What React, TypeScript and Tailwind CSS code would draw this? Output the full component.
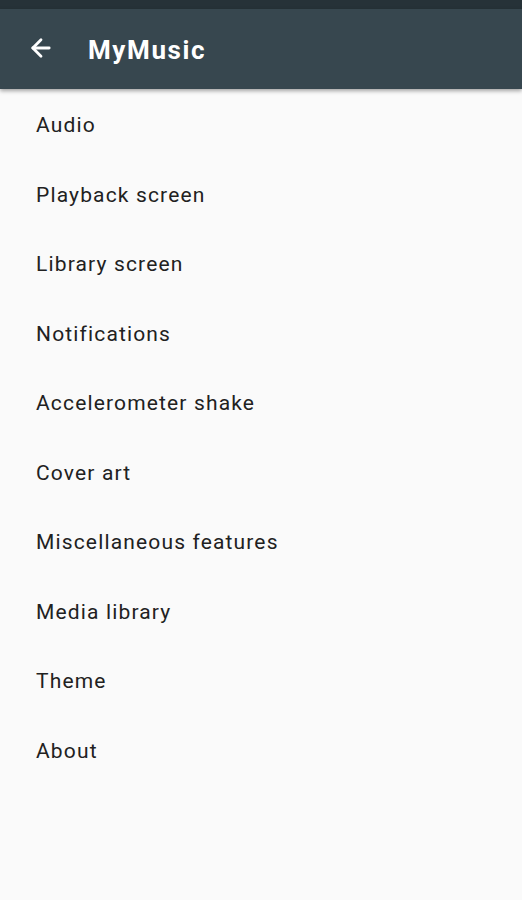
import { ArrowLeft } from "lucide-react";

const items = [
    "Audio",
    "Playback screen",
    "Library screen",
    "Notifications",
    "Accelerometer shake",
    "Cover art",
    "Miscellaneous features",
    "Media library",
    "Theme",
    "About",
];

export default function App() {
    return (
        <div className="w-[522px] h-[900px] bg-[#fafafa] flex flex-col overflow-hidden" style={{ fontFamily: "Roboto, 'Noto Sans', sans-serif" }}>
            {/* status bar */}
            <div className="h-[9px] bg-[#263238]" />
            {/* toolbar */}
            <div className="h-[80px] bg-[#37474f] flex items-center shadow-[0_2px_4px_rgba(0,0,0,0.35)] relative z-10">
                <div className="w-[88px] pl-[27px] flex items-center pb-[2px]">
                    <ArrowLeft className="w-[28px] h-[28px] text-white" strokeWidth={2.4} />
                </div>
                <h1 className="text-white text-[26px] font-bold tracking-[1.6px] pt-[2px]">MyMusic</h1>
            </div>
            {/* list */}
            <div className="flex flex-col pt-[2px]">
                {items.map((item) => (
                    <div key={item} className="h-[69.5px] flex items-center pl-[36px]">
                        <span className="text-[21px] tracking-[1.15px] text-[#212121]">{item}</span>
                    </div>
                ))}
            </div>
        </div>
    );
}
